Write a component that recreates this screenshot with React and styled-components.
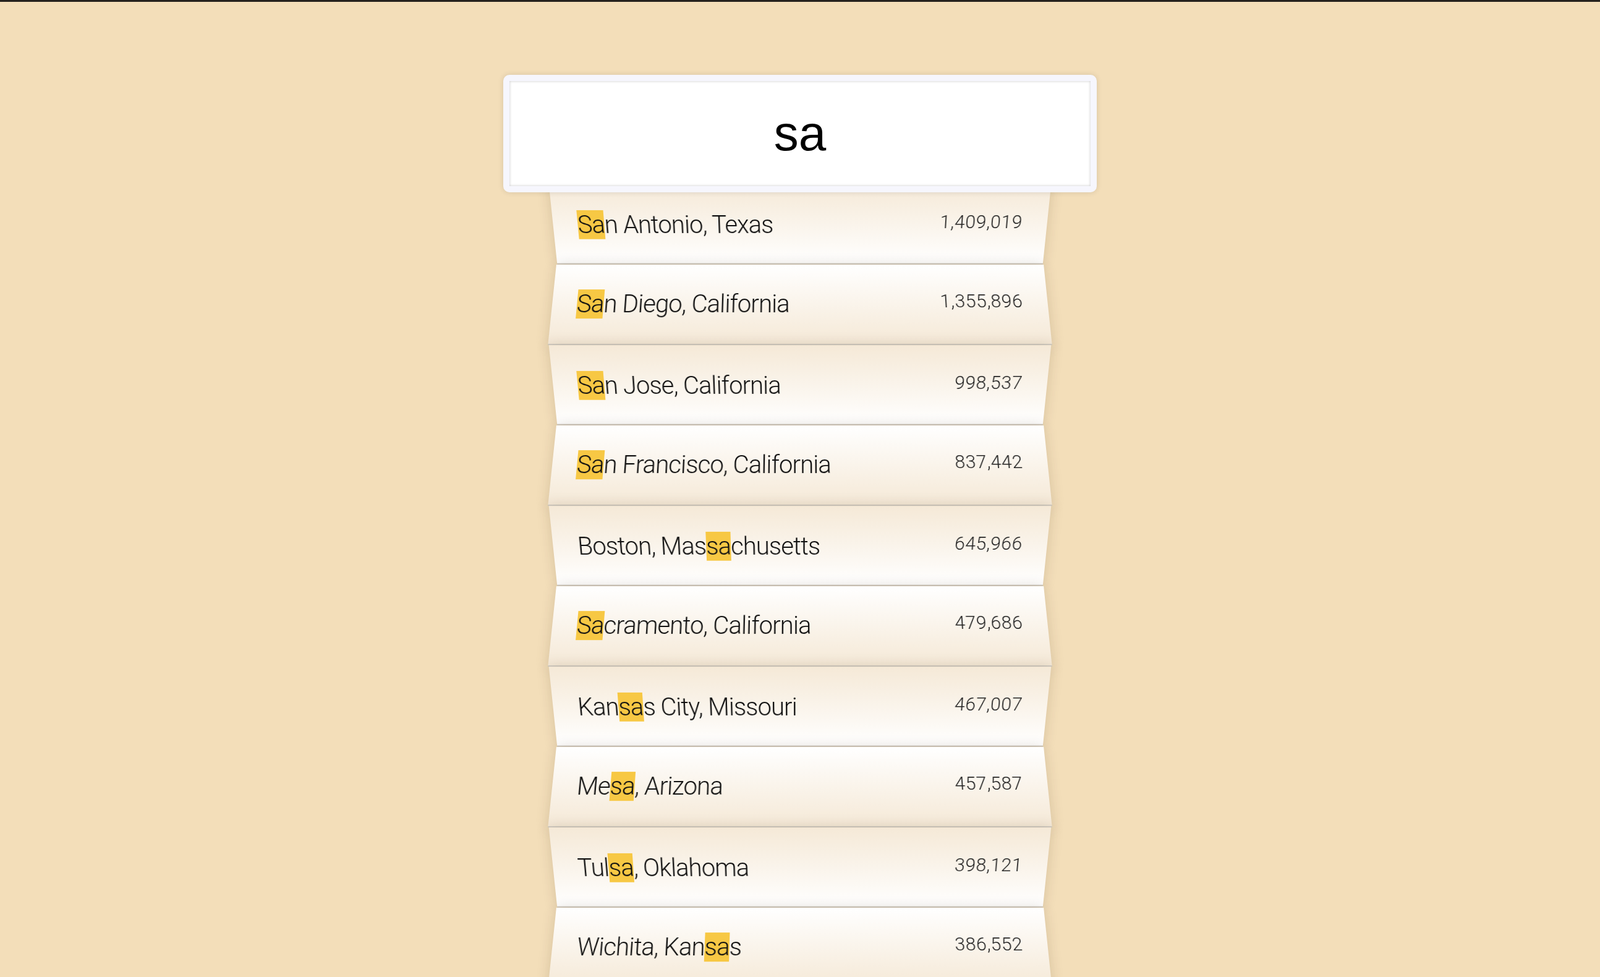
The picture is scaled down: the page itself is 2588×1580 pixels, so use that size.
import React from "react";
import styled, { createGlobalStyle } from "styled-components";

const Global = createGlobalStyle`
  html, body { margin: 0; padding: 0; }
  html {
    box-sizing: border-box;
    background: #f3deb9;
    border-top: 3px solid #25221e;
  }
  *, *::before, *::after { box-sizing: inherit; }
  body {
    font-family: Roboto, "Liberation Sans", sans-serif;
    font-weight: 300;
    font-size: 40px;
    overflow: hidden;
  }
`;

const Page = styled.div`
  display: flex;
  flex-direction: column;
  align-items: center;
  padding-top: 98px;
  height: 1577px;
  overflow: hidden;
`;

const Search = styled.input`
  position: relative;
  top: 20px;
  z-index: 2;
  flex-shrink: 0;
  width: 960px;
  height: 190px;
  margin: 0;
  padding: 0 40px;
  text-align: center;
  outline: 0;
  border: 10px solid #f6f6fd;
  border-radius: 10px;
  background: #fff;
  color: #000;
  font-family: "Liberation Sans", Arial, sans-serif;
  font-weight: 400;
  font-size: 80px;
  box-shadow: 0 0 10px rgba(0, 0, 0, 0.12), inset 0 0 4px rgba(0, 0, 0, 0.22);
`;

const List = styled.ul`
  flex-shrink: 0;
  margin: 2px 0 0;
  padding: 0;
  width: 800px;
  list-style: none;
`;

const Row = styled.li`
  display: flex;
  justify-content: space-between;
  align-items: flex-start;
  margin: 0;
  padding: 41px 40px 39px;
  height: 130px;
  border-bottom: 2px solid #cdc8c0;
  box-shadow: 0 0 20px rgba(60, 40, 10, 0.16);
  background: ${(p) =>
    p.$even
      ? "linear-gradient(to bottom, #ffffff 0%, #f5e9d7 100%)"
      : "linear-gradient(to top, #ffffff 0%, #f5e9d7 100%)"};
  transform: ${(p) =>
    p.$even
      ? "perspective(200px) rotateX(3deg) translateY(4px) scale(1.001)"
      : "perspective(200px) rotateX(-3deg) translateY(6px)"};
`;

const Name = styled.span`
  font-size: 40px;
  line-height: 48px;
  letter-spacing: -0.9px;
  color: #111;
  white-space: nowrap;
`;

const Population = styled.span`
  font-size: 30px;
  line-height: 38px;
  letter-spacing: 0.6px;
  color: #222;
`;

const Hl = styled.span`
  background: #f7c844;
`;

const cities = [
  ["San Antonio, Texas", "1,409,019"],
  ["San Diego, California", "1,355,896"],
  ["San Jose, California", "998,537"],
  ["San Francisco, California", "837,442"],
  ["Boston, Massachusetts", "645,966"],
  ["Sacramento, California", "479,686"],
  ["Kansas City, Missouri", "467,007"],
  ["Mesa, Arizona", "457,587"],
  ["Tulsa, Oklahoma", "398,121"],
  ["Wichita, Kansas", "386,552"],
];

function highlight(text, q) {
  const i = text.toLowerCase().indexOf(q);
  if (i < 0) return text;
  return (
    <>
      {text.slice(0, i)}
      <Hl>{text.slice(i, i + q.length)}</Hl>
      {text.slice(i + q.length)}
    </>
  );
}

export default function App() {
  const q = "sa";
  return (
    <>
      <Global />
      <Page>
        <Search type="text" defaultValue={q} />
        <List>
          {cities.map(([name, pop], i) => (
            <Row key={name} $even={i % 2 === 1}>
              <Name>{highlight(name, q)}</Name>
              <Population>{pop}</Population>
            </Row>
          ))}
        </List>
      </Page>
    </>
  );
}
